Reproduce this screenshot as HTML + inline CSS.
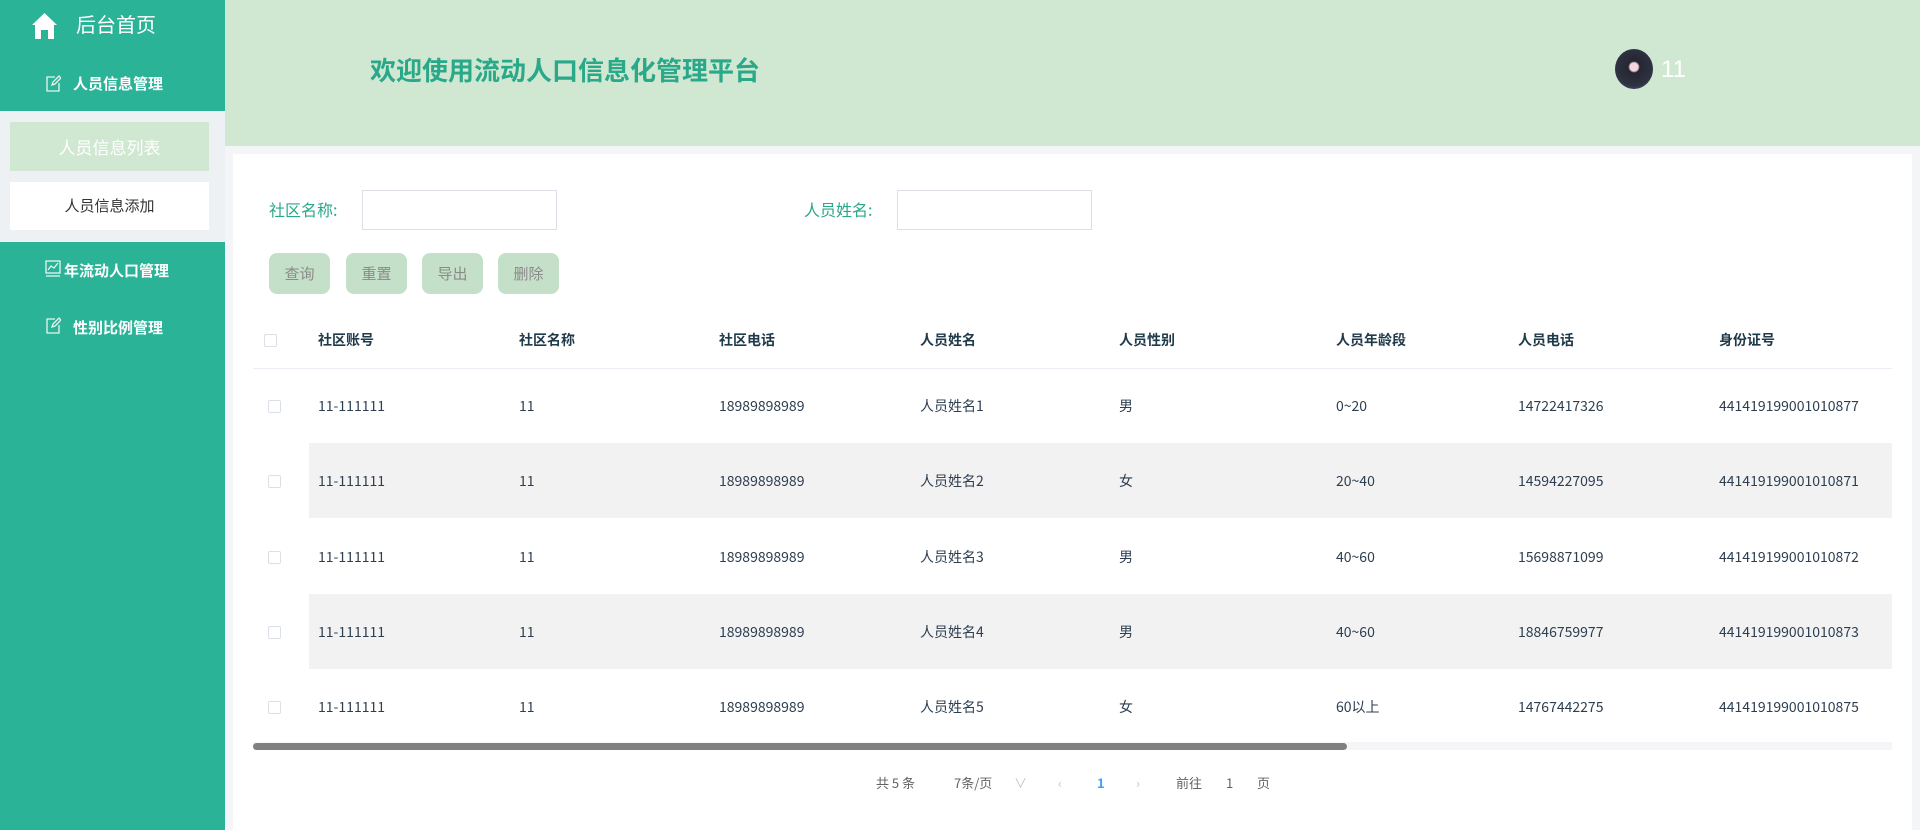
<!DOCTYPE html>
<html><head><meta charset="utf-8"><style>
*{margin:0;padding:0;box-sizing:border-box}
body{width:1920px;height:830px;overflow:hidden;background:#f4f5f7;font-family:"Noto Sans CJK SC","Liberation Sans",sans-serif;position:relative;line-height:1}
.abs{position:absolute}
.side{left:0;top:0;width:225px;height:830px;background:#2bb398}
.hdr{left:225px;top:0;width:1695px;height:146px;background:#d0e8d1}
.main{left:233px;top:154px;width:1679px;height:676px;background:#fff}
.w{color:#fff}
.mi{color:#fff;font-weight:bold;font-size:15px}
.lbl{color:#2aa88a;font-size:16px}
.inp{border:1px solid #dcdfe6;background:#fff;width:195px;height:40px}
.btn{width:61px;height:41px;background:#c5e0c8;border-radius:8px;color:#8a8a8a;font-size:15px;text-align:center;line-height:41px}
.th{font-size:14px;font-weight:bold;color:#1f3a4a}
.td{font-size:14px;color:#2c3e50}
.cb{width:13px;height:13px;border:1px solid #dcdfe6;border-radius:2px;background:#fff}
.stripe{left:309px;width:1583px;height:75px;background:#f2f2f2}
.pg{font-size:13px;color:#606266;top:776px}
</style></head><body>
<div class="abs side"></div>
<svg class="abs" style="left:31px;top:12px" width="27" height="28" viewBox="0 0 27 28"><path d="M13.5 1 L1 13 L4 13 L4 27 L10 27 L10 18 L17 18 L17 27 L23 27 L23 13 L26 13 Z" fill="#fff"/></svg>
<div class="abs w" style="left:76px;top:14px;font-size:20px">后台首页</div>
<svg class="abs" style="left:45px;top:75px" width="16" height="17" viewBox="0 0 16 17" fill="none" stroke="#e8f5f0" stroke-width="1.3"><path d="M10 2H2v14h12V8"/><path d="M7 10l1-3 6-6 2 2-6 6z"/></svg>
<div class="abs mi" style="left:73px;top:76px">人员信息管理</div>
<div class="abs" style="left:0;top:111px;width:225px;height:131px;background:#eef1f4"></div>
<div class="abs" style="left:10px;top:122px;width:199px;height:49px;background:#d0e8d1;color:#fff;font-size:17px;text-align:center;line-height:49px">人员信息列表</div>
<div class="abs" style="left:10px;top:182px;width:199px;height:48px;background:#fff;color:#333;font-size:15px;text-align:center;line-height:48px">人员信息添加</div>
<svg class="abs" style="left:45px;top:260px" width="16" height="17" viewBox="0 0 16 17" fill="none" stroke="#e8f5f0" stroke-width="1.3"><rect x="1" y="1" width="14" height="12"/><path d="M3 10l3-4 3 2 4-5M1 16h14"/></svg>
<div class="abs mi" style="left:64px;top:263px">年流动人口管理</div>
<svg class="abs" style="left:45px;top:317px" width="16" height="17" viewBox="0 0 16 17" fill="none" stroke="#e8f5f0" stroke-width="1.3"><path d="M10 2H2v14h12V8"/><path d="M7 10l1-3 6-6 2 2-6 6z"/></svg>
<div class="abs mi" style="left:73px;top:320px">性别比例管理</div>

<div class="abs hdr"></div>
<div class="abs" style="left:370px;top:57px;font-size:26px;font-weight:bold;color:#2aa88a">欢迎使用流动人口信息化管理平台</div>
<div class="abs" style="left:1615px;top:49px;width:38px;height:40px;border-radius:50%;background:radial-gradient(circle at 50% 45%,#f3d6df 0 14%,#262630 20%,#2e3242 65%,#5a6a9a)"></div>
<div class="abs" style="left:1661px;top:58px;font-size:24px;color:#fff;font-family:'Liberation Sans',sans-serif">11</div>

<div class="abs main"></div>
<div class="abs lbl" style="left:269px;top:201px">社区名称:</div>
<div class="abs inp" style="left:362px;top:190px"></div>
<div class="abs lbl" style="left:804px;top:201px">人员姓名:</div>
<div class="abs inp" style="left:897px;top:190px"></div>
<div class="abs btn" style="left:269px;top:253px">查询</div>
<div class="abs btn" style="left:346px;top:253px">重置</div>
<div class="abs btn" style="left:422px;top:253px">导出</div>
<div class="abs btn" style="left:498px;top:253px">删除</div>

<div class="abs" style="left:253px;top:368px;width:1639px;height:1px;background:#ebeef5"></div>
<div class="abs stripe" style="top:443px"></div>
<div class="abs stripe" style="top:594px"></div>
<div class="abs cb" style="left:264px;top:334px"></div>
<div class="abs th" style="left:318px;top:333px">社区账号</div>
<div class="abs th" style="left:519px;top:333px">社区名称</div>
<div class="abs th" style="left:719px;top:333px">社区电话</div>
<div class="abs th" style="left:920px;top:333px">人员姓名</div>
<div class="abs th" style="left:1119px;top:333px">人员性别</div>
<div class="abs th" style="left:1336px;top:333px">人员年龄段</div>
<div class="abs th" style="left:1518px;top:333px">人员电话</div>
<div class="abs th" style="left:1719px;top:333px">身份证号</div>

<div class="abs cb" style="left:268px;top:400px"></div>
<div class="abs td" style="left:318px;top:399px">11-111111</div><div class="abs td" style="left:519px;top:399px">11</div><div class="abs td" style="left:719px;top:399px">18989898989</div><div class="abs td" style="left:920px;top:399px">人员姓名1</div><div class="abs td" style="left:1119px;top:399px">男</div><div class="abs td" style="left:1336px;top:399px">0~20</div><div class="abs td" style="left:1518px;top:399px">14722417326</div><div class="abs td" style="left:1719px;top:399px">441419199001010877</div>

<div class="abs cb" style="left:268px;top:475px"></div>
<div class="abs td" style="left:318px;top:474px">11-111111</div><div class="abs td" style="left:519px;top:474px">11</div><div class="abs td" style="left:719px;top:474px">18989898989</div><div class="abs td" style="left:920px;top:474px">人员姓名2</div><div class="abs td" style="left:1119px;top:474px">女</div><div class="abs td" style="left:1336px;top:474px">20~40</div><div class="abs td" style="left:1518px;top:474px">14594227095</div><div class="abs td" style="left:1719px;top:474px">441419199001010871</div>

<div class="abs cb" style="left:268px;top:551px"></div>
<div class="abs td" style="left:318px;top:550px">11-111111</div><div class="abs td" style="left:519px;top:550px">11</div><div class="abs td" style="left:719px;top:550px">18989898989</div><div class="abs td" style="left:920px;top:550px">人员姓名3</div><div class="abs td" style="left:1119px;top:550px">男</div><div class="abs td" style="left:1336px;top:550px">40~60</div><div class="abs td" style="left:1518px;top:550px">15698871099</div><div class="abs td" style="left:1719px;top:550px">441419199001010872</div>

<div class="abs cb" style="left:268px;top:626px"></div>
<div class="abs td" style="left:318px;top:625px">11-111111</div><div class="abs td" style="left:519px;top:625px">11</div><div class="abs td" style="left:719px;top:625px">18989898989</div><div class="abs td" style="left:920px;top:625px">人员姓名4</div><div class="abs td" style="left:1119px;top:625px">男</div><div class="abs td" style="left:1336px;top:625px">40~60</div><div class="abs td" style="left:1518px;top:625px">18846759977</div><div class="abs td" style="left:1719px;top:625px">441419199001010873</div>

<div class="abs cb" style="left:268px;top:701px"></div>
<div class="abs td" style="left:318px;top:700px">11-111111</div><div class="abs td" style="left:519px;top:700px">11</div><div class="abs td" style="left:719px;top:700px">18989898989</div><div class="abs td" style="left:920px;top:700px">人员姓名5</div><div class="abs td" style="left:1119px;top:700px">女</div><div class="abs td" style="left:1336px;top:700px">60以上</div><div class="abs td" style="left:1518px;top:700px">14767442275</div><div class="abs td" style="left:1719px;top:700px">441419199001010875</div>

<div class="abs" style="left:253px;top:742px;width:1639px;height:8px;background:#f5f5f7"></div>
<div class="abs" style="left:253px;top:743px;width:1094px;height:7px;background:#808080;border-radius:4px"></div>

<div class="abs pg" style="left:876px">共 5 条</div>
<div class="abs pg" style="left:954px">7条/页</div>
<div class="abs pg" style="left:1014px;color:#c0c4cc">∨</div>
<div class="abs pg" style="left:1058px;color:#c0c4cc">‹</div>
<div class="abs pg" style="left:1097px;color:#409eff;font-weight:bold">1</div>
<div class="abs pg" style="left:1136px;color:#c0c4cc">›</div>
<div class="abs pg" style="left:1176px">前往</div>
<div class="abs pg" style="left:1226px">1</div>
<div class="abs pg" style="left:1257px">页</div>
</body></html>
